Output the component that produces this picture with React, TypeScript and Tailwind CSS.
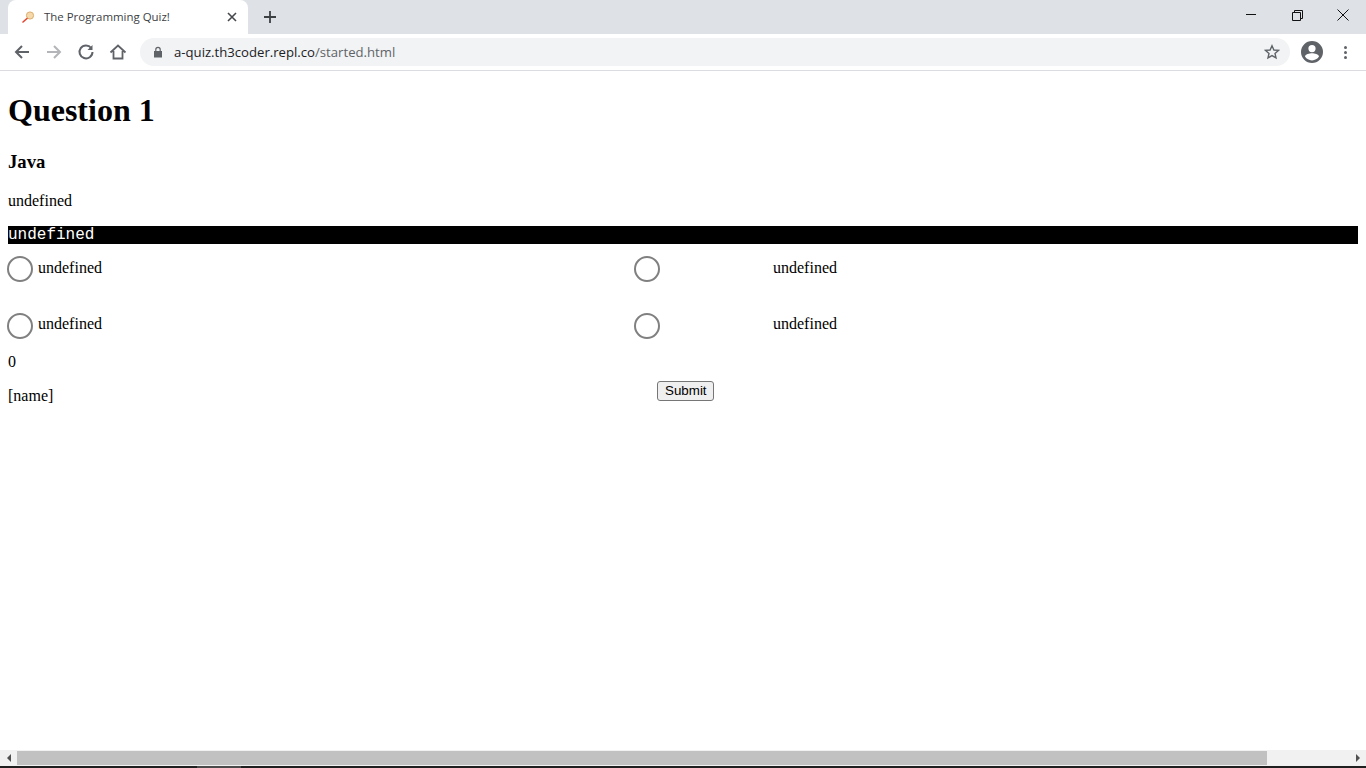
import React from "react";

const ui = "font-['Open_Sans',sans-serif]";
const serif = "font-['Liberation_Serif',serif]";

const Favicon = () => (
  <svg width="16" height="16" viewBox="0 0 16 16" fill="none">
    <circle cx="9" cy="6.5" r="3.6" fill="#f5d9ad" stroke="#dcae6c" strokeWidth="1" />
    <path d="M6 9.5 L2 13" stroke="#e0452c" strokeWidth="1.6" strokeLinecap="round" />
  </svg>
);

const NavIcon = ({ d, color = "#5f6368", w = 2 }: { d: string; color?: string; w?: number }) => (
  <svg width="18" height="18" viewBox="0 0 18 18" fill="none" stroke={color} strokeWidth={w}>
    <path d={d} />
  </svg>
);

const Radio = () => <div className="w-[26px] h-[26px] shrink-0 rounded-full border-[2.5px] border-[#808080] bg-white" />;

const Option = ({ gap, top }: { gap: string; top: string }) => (
  <div className="flex items-start">
    <Radio />
    <span className={`${gap} ${top} leading-[18px]`}>undefined</span>
  </div>
);

const Chrome = () => (
  <div className="shrink-0">
    <div className="h-[34px] bg-[#dee1e6] flex items-end">
      <div className="ml-2 w-[240px] h-[34px] bg-white rounded-t-lg flex items-center pl-[13px] pr-[11px]">
        <Favicon />
        <span className={`${ui} ml-[7px] text-[11.45px] text-[#3c4043] flex-1`}>The Programming Quiz!</span>
        <svg width="10" height="10" viewBox="0 0 10 10" stroke="#45484c" strokeWidth="1.6" fill="none">
          <path d="M1 1 L9 9 M9 1 L1 9" />
        </svg>
      </div>
      <div className="ml-[15px] h-[34px] flex items-center">
        <svg width="14" height="14" viewBox="0 0 14 14" stroke="#3c4043" strokeWidth="1.8" fill="none">
          <path d="M7 1 V13 M1 7 H13" />
        </svg>
      </div>
      <div className="ml-auto h-[34px] flex items-start text-black">
        <div className="w-[46px] h-[30px] flex items-center justify-center">
          <svg width="10" height="10" viewBox="0 0 10 10" stroke="#111" fill="none"><path d="M0 4.5 H10" /></svg>
        </div>
        <div className="w-[46px] h-[30px] flex items-center justify-center">
          <svg width="11" height="11" viewBox="0 0 11 11" stroke="#111" fill="none">
            <path d="M.5 2.5 H8.5 V10.5 H.5 Z M2.5 2.5 V.5 H10.5 V8.5 H8.5" />
          </svg>
        </div>
        <div className="w-[46px] h-[30px] flex items-center justify-center">
          <svg width="12" height="12" viewBox="0 0 12 12" stroke="#111" fill="none"><path d="M.5 .5 L11.5 11.5 M11.5 .5 L.5 11.5" /></svg>
        </div>
      </div>
    </div>
    <div className="h-[36px] bg-white flex items-center pl-[13px] pr-[19px]">
      <NavIcon d="M16 9 H3 M9 3 L3 9 L9 15" />
      <div className="w-[14px]" />
      <NavIcon d="M2 9 H15 M9 3 L15 9 L9 15" color="#b3b5b8" />
      <div className="w-[14px]" />
      <svg width="18" height="18" viewBox="0 0 18 18" fill="none" stroke="#5f6368" strokeWidth="2">
        <path d="M14.2 5 A6.5 6.5 0 1 0 15.5 9" />
        <path d="M15.5 2 V7 H10.5 Z" fill="#5f6368" stroke="none" />
      </svg>
      <div className="w-[14px]" />
      <NavIcon d="M1.5 9.5 L9 2.5 L16.5 9.5 M4.5 8 V15.5 H13.5 V8" w={1.8} />
      <div className="ml-[13px] flex-1 h-[28px] rounded-full bg-[#f1f3f4] flex items-center pl-[13px] pr-[10px]">
        <svg width="10" height="12" viewBox="0 0 10 12" fill="#5f6368">
          <path d="M1 5 H9 V11.5 H1 Z" />
          <path d="M2.8 5 V3.5 A2.2 2.2 0 0 1 7.2 3.5 V5" fill="none" stroke="#5f6368" strokeWidth="1.2" />
        </svg>
        <span className={`${ui} ml-[11px] pt-px text-[13.15px] text-[#202124]`}>
          a-quiz.th3coder.repl.co<span className="text-[#5f6368]">/started.html</span>
        </span>
        <svg className="ml-auto" width="16" height="16" viewBox="0 0 16 16" fill="none" stroke="#5f6368" strokeWidth="1.4">
          <path d="M8 1.8 L9.9 6 L14.4 6.4 L11 9.4 L12 13.9 L8 11.6 L4 13.9 L5 9.4 L1.6 6.4 L6.1 6 Z" />
        </svg>
      </div>
      <svg className="ml-[11px]" width="22" height="22" viewBox="0 0 22 22" fill="#5f6368">
        <path d="M11 0 A11 11 0 1 0 11 22 A11 11 0 1 0 11 0 Z M11 4 A3.6 3.6 0 1 1 11 11.2 A3.6 3.6 0 1 1 11 4 Z M11 19.4 A8.4 8.4 0 0 1 4 15.6 C4.1 13.4 8.6 12.3 11 12.3 C13.4 12.3 17.9 13.4 18 15.6 A8.4 8.4 0 0 1 11 19.4 Z" fillRule="evenodd" />
      </svg>
      <div className="ml-[21px] flex flex-col gap-[2px]">
        <div className="w-[3px] h-[3px] rounded-full bg-[#5f6368]" />
        <div className="w-[3px] h-[3px] rounded-full bg-[#5f6368]" />
        <div className="w-[3px] h-[3px] rounded-full bg-[#5f6368]" />
      </div>
    </div>
    <div className="h-px bg-[#dadce0]" />
  </div>
);

const ScrollBar = () => (
  <div className="shrink-0">
    <div className="h-4 bg-[#f1f1f1] flex items-center">
      <div className="w-[17px] flex justify-center">
        <div className="w-0 h-0 border-y-[4px] border-y-transparent border-r-[4px] border-r-[#505050]" />
      </div>
      <div className="w-[1250px] h-[14px] bg-[#c1c1c1]" />
      <div className="ml-auto w-[17px] flex justify-center">
        <div className="w-0 h-0 border-y-[4px] border-y-transparent border-l-[4px] border-l-[#505050]" />
      </div>
    </div>
    <div className="h-[2px] bg-[#1f1f1f]">
      <div className="ml-[197px] w-[44px] h-[2px] bg-[#4a4a4a]" />
    </div>
  </div>
);

export default function App() {
  return (
    <div className="h-screen overflow-hidden flex flex-col bg-white">
      <Chrome />
      <main className={`${serif} flex-1 px-2 text-[16px] text-black`}>
        <h1 className="mt-[21px] text-[32px] font-bold leading-[37px]">Question 1</h1>
        <h3 className="mt-[22px] text-[18.72px] font-bold leading-[21px]">Java</h3>
        <p className="mt-5 leading-[18px]">undefined</p>
        <pre className="mt-4 h-[18px] bg-black text-white font-['Liberation_Mono',monospace] text-[16px] leading-[18px]">undefined</pre>
        <div className="-ml-px mt-3 grid grid-cols-[627px_1fr] gap-y-[31px]">
          <Option gap="ml-[5px]" top="mt-[3px]" />
          <Option gap="ml-[113px]" top="mt-[3px]" />
          <Option gap="ml-[5px]" top="mt-[2px]" />
          <Option gap="ml-[113px]" top="mt-[2px]" />
        </div>
        <p className="mt-[14px] leading-[18px]">0</p>
        <div className="flex">
          <p className="mt-4 leading-[18px]">[name]</p>
          <button className="ml-[604px] mt-[10px] h-5 w-[57px] bg-[#efefef] border border-[#767676] rounded-[3px] text-[13.33px] font-['Liberation_Sans',sans-serif] leading-none">
            Submit
          </button>
        </div>
      </main>
      <ScrollBar />
    </div>
  );
}
